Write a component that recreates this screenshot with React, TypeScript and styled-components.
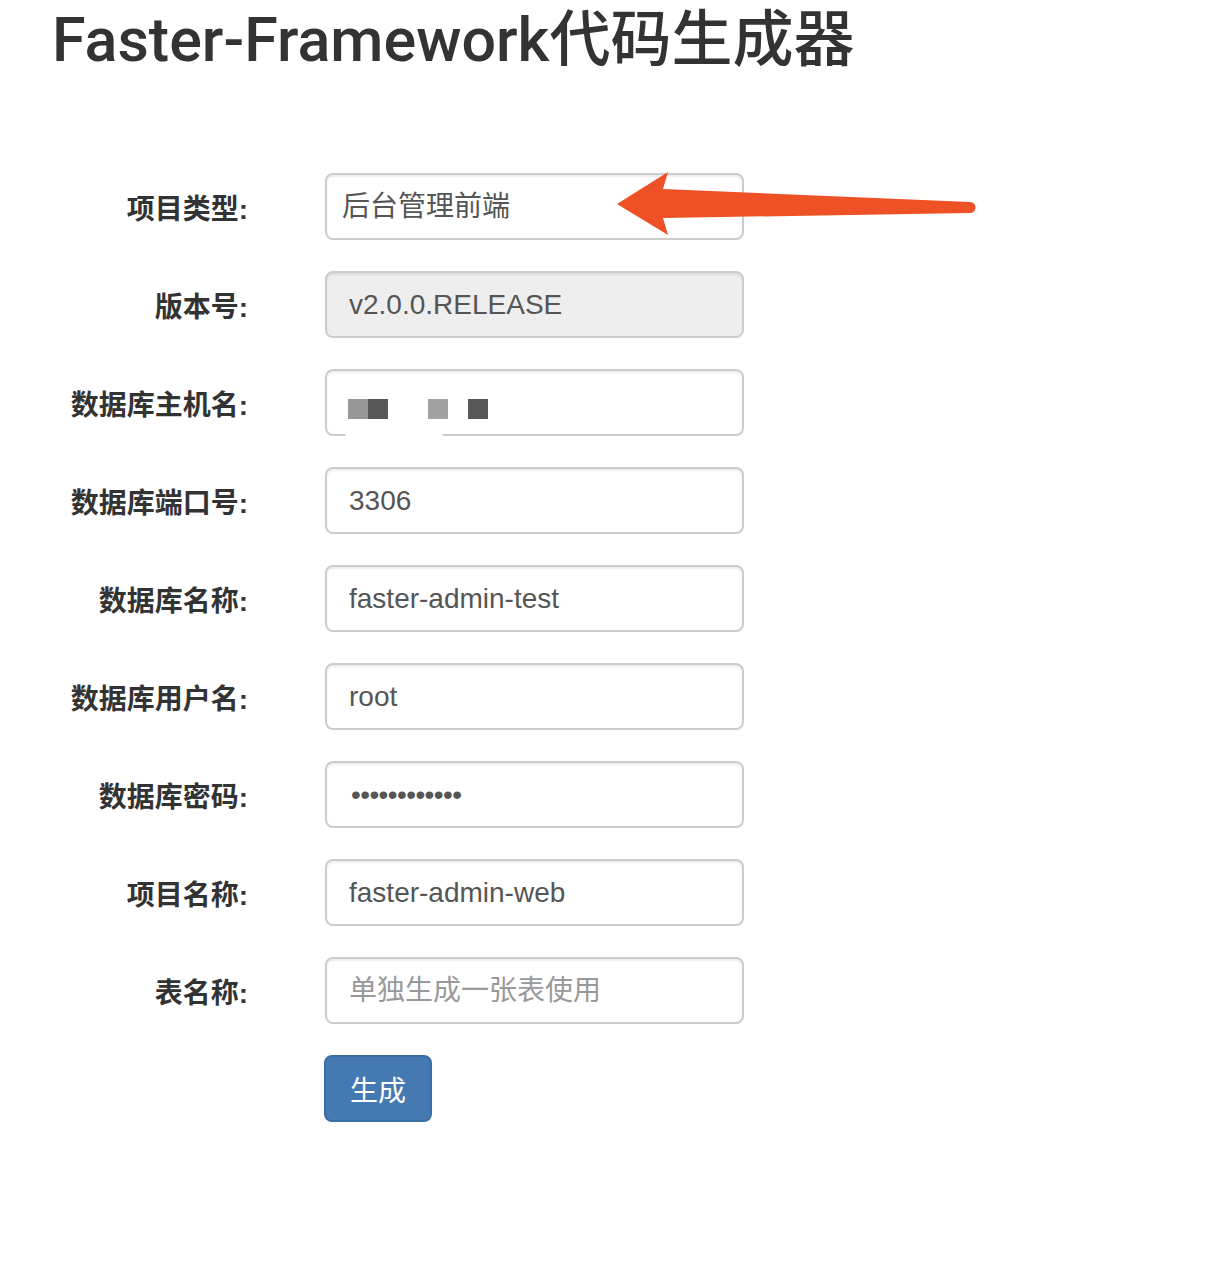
import React from "react";
import styled, { createGlobalStyle } from "styled-components";

const GlobalStyle = createGlobalStyle`
  html, body {
    margin: 0;
    padding: 0;
    background: #fff;
  }
  body {
    font-family: "Helvetica Neue", "Liberation Sans", "Noto Sans CJK SC", sans-serif;
    color: #333;
  }
`;

type Field = {
  label: string;
  kind: "select" | "text" | "disabled" | "password" | "mosaic";
  value?: string;
  placeholder?: string;
};

const fields: Field[] = [
  { label: "项目类型:", kind: "select", value: "后台管理前端" },
  { label: "版本号:", kind: "disabled", value: "v2.0.0.RELEASE" },
  { label: "数据库主机名:", kind: "mosaic" },
  { label: "数据库端口号:", kind: "text", value: "3306" },
  { label: "数据库名称:", kind: "text", value: "faster-admin-test" },
  { label: "数据库用户名:", kind: "text", value: "root" },
  { label: "数据库密码:", kind: "password", value: "123456789012" },
  { label: "项目名称:", kind: "text", value: "faster-admin-web" },
  { label: "表名称:", kind: "text", placeholder: "单独生成一张表使用" },
];

// blurred host name in the screenshot
const mosaic = ["#979797", "#575757", null, null, "#a2a2a2", null, "#575757"];

const App = () => {
  return (
    <Page>
      <GlobalStyle />
      <Title>Faster-Framework代码生成器</Title>
      <Form>
        {fields.map((field) => (
          <FormGroup key={field.label}>
            <Label>{field.label}</Label>
            {field.kind === "select" && (
              <Select defaultValue={field.value}>
                <option value={field.value}>{field.value}</option>
              </Select>
            )}
            {field.kind === "mosaic" && (
              <FakeInput>
                {mosaic.map((tone, i) => (
                  <Pixel key={i} $tone={tone} />
                ))}
                <BorderGap />
              </FakeInput>
            )}
            {(field.kind === "text" || field.kind === "disabled") && (
              <Input
                type="text"
                readOnly
                disabled={field.kind === "disabled"}
                defaultValue={field.value}
                placeholder={field.placeholder}
              />
            )}
            {field.kind === "password" && (
              <Password type="password" readOnly defaultValue={field.value} />
            )}
          </FormGroup>
        ))}
        <ButtonRow>
          <SubmitButton type="button">生成</SubmitButton>
        </ButtonRow>
      </Form>
      <Arrow viewBox="0 0 375 80" width="375" height="80">
        <path
          d="M7 39 L58 7 L53 24 L360 37 A5.5 5.5 0 0 1 360 48 L53 53 L58 70 Z"
          fill="#ee5125"
        />
      </Arrow>
    </Page>
  );
};

const Page = styled.div`
  position: relative;
  min-height: 1276px;
  padding-top: 6px;
  box-sizing: border-box;
`;

const Title = styled.h1`
  margin: 0;
  padding-left: 52px;
  font-family: Roboto, "Noto Sans CJK SC", sans-serif;
  font-size: 61px;
  font-weight: 500;
  line-height: 68px;
  color: #333;
`;

const Form = styled.form`
  display: flex;
  flex-direction: column;
  gap: 31px;
  margin-top: 99px;
`;

const FormGroup = styled.div`
  display: flex;
  align-items: center;
`;

const Label = styled.label`
  width: 248px;
  margin-right: 77px;
  text-align: right;
  font-size: 28px;
  font-weight: 700;
  color: #333;
  white-space: nowrap;
`;

const controlBase = `
  box-sizing: border-box;
  width: 419px;
  height: 67px;
  border: 2px solid #ccc;
  border-radius: 8px;
  box-shadow: inset 0 2px 2px rgba(0, 0, 0, 0.075);
  font-family: "Helvetica Neue", "Liberation Sans", "Noto Sans CJK SC", sans-serif;
  font-size: 28px;
  color: #555;
  background: #fff;
  outline: none;
`;

const Input = styled.input`
  ${controlBase}
  padding: 0 22px;

  &::placeholder {
    color: #999;
  }

  &:disabled {
    background: #eee;
    color: #555;
    opacity: 1;
  }
`;

const Password = styled(Input)`
  padding-left: 24px;
  letter-spacing: -0.6px;
`;

const Select = styled.select`
  ${controlBase}
  appearance: none;
  padding: 0 15px;
  color: #555;
`;

const FakeInput = styled.div`
  ${controlBase}
  position: relative;
  display: flex;
  align-items: center;
  padding: 12px 0 0 21px;
`;

const Pixel = styled.span<{ $tone: string | null }>`
  width: 20px;
  height: 20px;
  background: ${({ $tone }) => $tone ?? "transparent"};
`;

const BorderGap = styled.span`
  position: absolute;
  left: 18px;
  bottom: -3px;
  width: 98px;
  height: 5px;
  background: #fff;
  border-radius: 6px 6px 0 0;
`;

const ButtonRow = styled.div`
  padding-left: 324px;
`;

const SubmitButton = styled.button`
  box-sizing: border-box;
  height: 67px;
  padding: 0 24px;
  border: 2px solid #3a6da3;
  border-radius: 8px;
  background: #4579b1;
  color: #fff;
  font-family: "Helvetica Neue", "Liberation Sans", "Noto Sans CJK SC", sans-serif;
  font-size: 28px;
  cursor: pointer;
`;

const Arrow = styled.svg`
  position: absolute;
  left: 610px;
  top: 165px;
  pointer-events: none;
`;

export default App;
